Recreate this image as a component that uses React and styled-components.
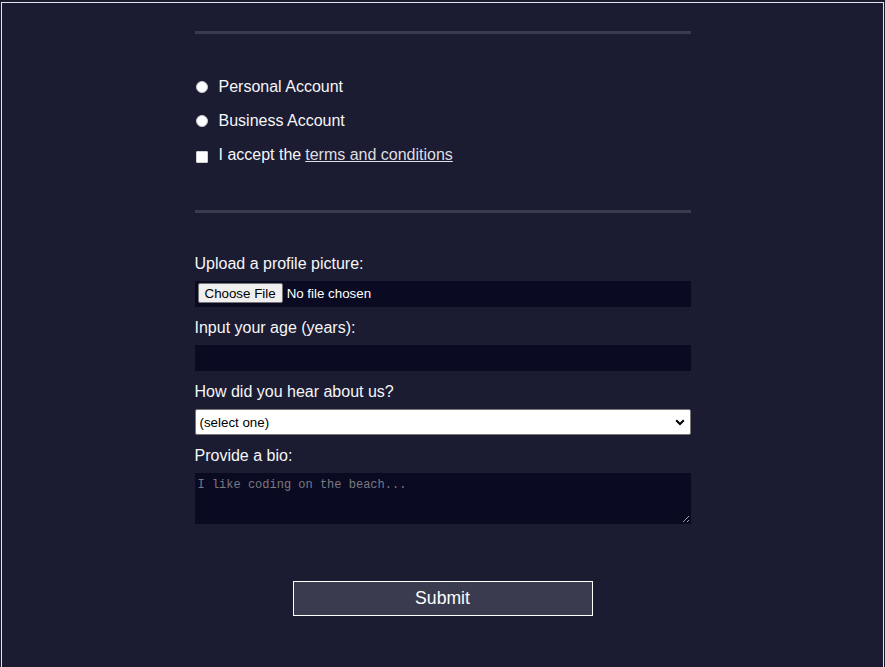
import React from 'react';
import styled, { createGlobalStyle } from 'styled-components';

const GlobalStyle = createGlobalStyle`
	html, body {
		margin: 0;
		padding: 0;
		background-color: #1b1b32;
	}
	body {
		font-family: "Liberation Sans", Arial, sans-serif;
		font-size: 16px;
		color: #f5f6f7;
	}
`;

const Frame = styled.div`
	margin: 2px 1px 0 1px;
	height: 665px;
	box-sizing: border-box;
	border: 1px solid #e4e4ea;
	border-bottom: none;
	overflow: hidden;
`;

const Form = styled.form`
	width: 496px;
	margin: 0 auto;
	display: flex;
	flex-direction: column;
`;

const Fieldset = styled.fieldset`
	margin: 0;
	border: none;
	padding: ${p => p.$pad};
	display: flex;
	flex-direction: column;
	gap: ${p => p.$gap || '0px'};
	border-bottom: ${p => (p.$divider ? '3px solid #3b3b4f' : 'none')};
	min-width: 0;
`;

const OptionRow = styled.label`
	display: flex;
	align-items: center;
	height: 20px;
	line-height: 20px;
`;

const Radio = styled.input`
	appearance: none;
	width: 12px;
	height: 12px;
	margin: 0 11px 0 1px;
	border-radius: 50%;
	background: #ffffff;
	border: 1px solid #c8c8cc;
	box-sizing: border-box;
`;

const Checkbox = styled.input`
	appearance: none;
	width: 12px;
	height: 12px;
	margin: ${p => p.$nudge || 0}px 11px 0 1px;
	border-radius: 1px;
	background: #ffffff;
	border: 1px solid #d0d0d4;
	box-sizing: border-box;
`;

const Link = styled.a`
	color: #dfdfe2;
	margin-left: 4px;
`;

const Field = styled.label`
	display: flex;
	flex-direction: column;
	gap: 6px;
	line-height: 23px;
`;

const TextInput = styled.input`
	width: 100%;
	height: 26px;
	margin: 0;
	box-sizing: border-box;
	background-color: #0a0a23;
	border: 1px solid #0a0a23;
	color: #ffffff;
	font-family: "Liberation Sans", Arial, sans-serif;
	font-size: 13.33px;
`;

const FileInput = styled(TextInput)`
	padding: 1px 2px;
	line-height: 20px;

	&::file-selector-button {
		font-family: "Liberation Sans", Arial, sans-serif;
		font-size: 13.33px;
		height: 20px;
		padding: 0 6px;
		margin-right: 4px;
		background: #efefef;
		color: #000000;
		border: 1px solid #767676;
		border-radius: 2px;
	}
`;

const SelectWrap = styled.div`
	position: relative;
	height: 26px;
`;

const Select = styled.select`
	appearance: none;
	width: 100%;
	height: 26px;
	margin: 0;
	padding: 0 4px;
	box-sizing: border-box;
	background: #ffffff;
	color: #000000;
	border: 1px solid #767676;
	border-radius: 2px;
	font-family: "Liberation Sans", Arial, sans-serif;
	font-size: 13.33px;
`;

const Chevron = styled.svg`
	position: absolute;
	right: 6px;
	top: 10px;
	pointer-events: none;
`;

const Bio = styled.textarea`
	width: 100%;
	height: 51px;
	margin: 0;
	padding: 4px 2px 2px;
	box-sizing: border-box;
	background-color: #0a0a23;
	border: 1px solid #0a0a23;
	color: #ffffff;
	font-family: "Liberation Mono", monospace;
	font-size: 12px;
	line-height: 15px;

	&::placeholder {
		color: #7a7a80;
	}
`;

const Submit = styled.input`
	display: block;
	width: 300px;
	height: 35px;
	margin: 57px auto 0;
	box-sizing: border-box;
	background-color: #3b3b4f;
	border: 1px solid #ffffff;
	color: #ffffff;
	font-family: "Liberation Sans", Arial, sans-serif;
	font-size: 17.6px;
`;

const App = () => {
	return (
		<>
			<GlobalStyle />
			<Frame>
				<Form onSubmit={e => e.preventDefault()}>
					{/* tail of the previous fieldset, only its divider shows */}
					<Fieldset $pad="28px 0 0" $divider />

					<Fieldset $pad="43px 0 45px" $gap="14px" $divider>
						<OptionRow>
							<Radio type="radio" name="account-type" />
							Personal Account
						</OptionRow>
						<OptionRow>
							<Radio type="radio" name="account-type" />
							Business Account
						</OptionRow>
						<OptionRow>
							<Checkbox type="checkbox" $nudge={3} />
							I accept the<Link href="#">terms and conditions</Link>
						</OptionRow>
					</Fieldset>

					<Fieldset $pad="39px 0 0" $gap="9px">
						<Field>
							Upload a profile picture:
							<FileInput type="file" />
						</Field>
						<Field>
							Input your age (years):
							<TextInput type="number" min="13" max="120" />
						</Field>
						<Field>
							How did you hear about us?
							<SelectWrap>
								<Select defaultValue="">
									<option value="">(select one)</option>
									<option value="1">freeCodeCamp News</option>
									<option value="2">freeCodeCamp YouTube Channel</option>
									<option value="3">freeCodeCamp Forum</option>
									<option value="4">Other</option>
								</Select>
								<Chevron width="10" height="7" viewBox="0 0 10 7">
									<polyline points="1.2,1.2 5,5 8.8,1.2" fill="none" stroke="#000" strokeWidth="2" />
								</Chevron>
							</SelectWrap>
						</Field>
						<Field>
							Provide a bio:
							<Bio rows="3" cols="30" placeholder="I like coding on the beach..." />
						</Field>
					</Fieldset>

					<Submit type="submit" value="Submit" />
				</Form>
			</Frame>
		</>
	);
};

export default App;
